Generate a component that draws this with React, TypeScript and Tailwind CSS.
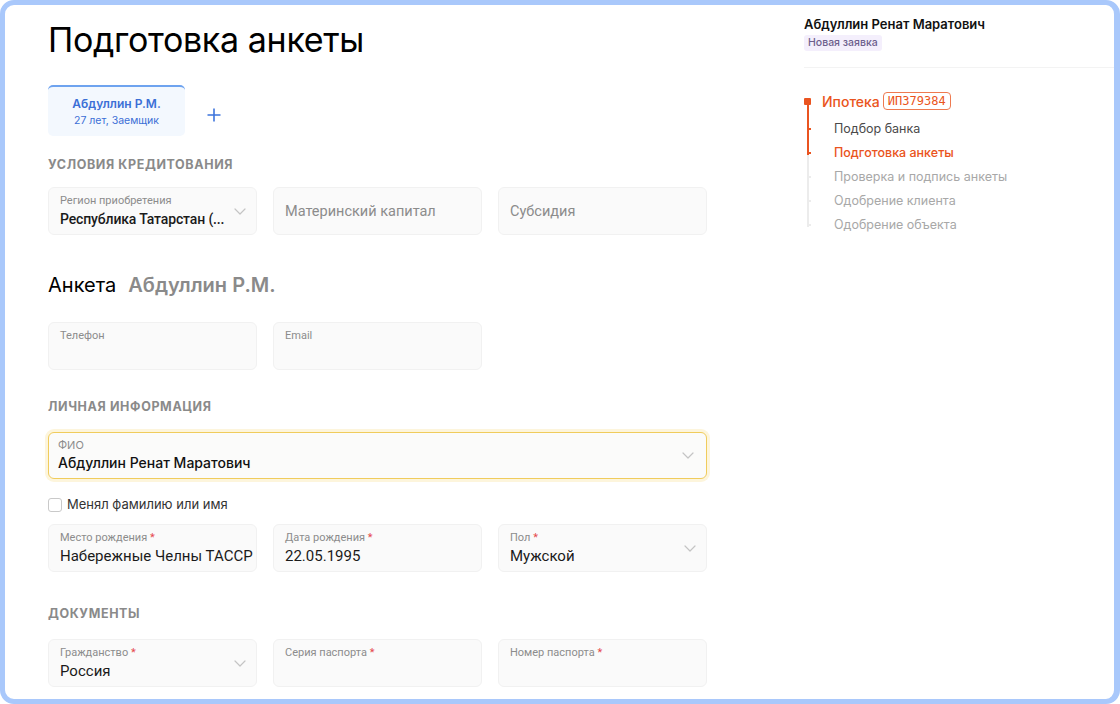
import React from "react";

const Chevron = () => (
  <svg width="12" height="7" viewBox="0 0 12 7" fill="none" className="shrink-0">
    <path d="M1 1l5 5 5-5" stroke="#c4c4c4" strokeWidth="1.2" strokeLinecap="round" strokeLinejoin="round" />
  </svg>
);

const Req = () => <span className="text-[#e5484d]"> *</span>;

function Field({ label, value, req, chevron, placeholder, valueClass = "text-[15px]" }: { label?: string; value?: string; req?: boolean; chevron?: boolean; placeholder?: string; valueClass?: string }) {
  return (
    <div className="h-[48px] rounded-[6px] bg-[#fafafa] border border-[#f1f1f1] flex items-center pl-[11px] pr-[10px]" style={{ fontFamily: "Roboto, sans-serif" }}>
      {placeholder ? (
        <div className="flex-1 text-[14.5px] text-[#8c8c8c] pt-[2px]">{placeholder}</div>
      ) : (
        <div className="flex-1 min-w-0 self-start pt-[6px]">
          <div className="text-[11px] leading-[14px] text-[#8c8c8c]">
            {label}
            {req && <Req />}
          </div>
          <div className={"leading-[22px] text-[#1a1a1a] whitespace-nowrap " + valueClass}>{value}</div>
        </div>
      )}
      {chevron && <Chevron />}
    </div>
  );
}

const Header = ({ children, className = "" }: { children: React.ReactNode; className?: string }) => (
  <div className={"text-[12.5px] leading-[16px] font-bold tracking-[0.05em] text-[#8a8a8a] " + className}>{children}</div>
);

export default function App() {
  const steps = [
    { t: "Подбор банка", c: "text-[#4a4a4a]", done: true },
    { t: "Подготовка анкеты", c: "text-[#ea5420] font-medium", done: true },
    { t: "Проверка и подпись анкеты", c: "text-[#a8a8a8]", done: false },
    { t: "Одобрение клиента", c: "text-[#a8a8a8]", done: false },
    { t: "Одобрение объекта", c: "text-[#a8a8a8]", done: false },
  ];
  return (
    <div className="w-[1120px] h-[704px] bg-white" style={{ fontFamily: "Inter, 'Noto Sans', sans-serif" }}>
      <div className="w-[1120px] h-[704px] rounded-[14px] border-[5px] border-r-[6px] border-[#a9c8fb] bg-white flex overflow-hidden">
        {/* main */}
        <div className="w-[756px] pl-[43px] pt-[13px] shrink-0">
          <div className="text-[34px] leading-[44px] text-black tracking-[-0.01em]">
            Подготовка анкеты
          </div>
          <div className="mt-[23px] flex items-center">
            <div className="w-[137px] h-[51px] rounded-[5px] bg-[#f3f8fe] border-t-2 border-[#6ea3ef] flex flex-col items-center justify-center">
              <div className="text-[12px] leading-[17px] font-semibold text-[#3b6fd6]">Абдуллин Р.М.</div>
              <div className="text-[10.5px] leading-[17px] text-[#3b6fd6]">27 лет, Заемщик</div>
            </div>
            <svg width="14" height="14" viewBox="0 0 14 14" className="ml-[22px] mt-[9px]">
              <path d="M7 0.5v13M0.5 7h13" stroke="#3d74dc" strokeWidth="1.6" />
            </svg>
          </div>

          <Header className="mt-[21px]">УСЛОВИЯ КРЕДИТОВАНИЯ</Header>
          <div className="mt-[14px] grid grid-cols-3 gap-x-[16px] w-[659px]">
            <Field label="Регион приобретения" value="Республика Татарстан (..." chevron valueClass="text-[14px] font-medium tracking-[-0.01em]" />
            <Field placeholder="Материнский капитал" />
            <Field placeholder="Субсидия" />
          </div>

          <div className="mt-[36px] flex items-baseline gap-[12px] text-[20px] leading-[28px]">
            <span className="text-black">Анкета</span>
            <span className="text-[#8a8a8a] font-semibold">Абдуллин Р.М.</span>
          </div>
          <div className="mt-[23px] grid grid-cols-3 gap-x-[16px] w-[659px]">
            <Field label="Телефон" value="" />
            <Field label="Email" value="" />
          </div>

          <Header className="mt-[29px]">ЛИЧНАЯ ИНФОРМАЦИЯ</Header>
          <div className="mt-[17px] w-[659px] h-[47px] rounded-[6px] bg-[#fbfbfa] border border-[#f0cc5c] shadow-[0_0_0_3px_#fdf5dc] flex items-center pl-[9px] pr-[12px]">
            <div className="flex-1 self-start pt-[5px]">
              <div className="text-[11px] leading-[14px] text-[#8c8c8c]">ФИО</div>
              <div className="text-[14px] leading-[22px] font-medium text-[#111]">Абдуллин Ренат Маратович</div>
            </div>
            <Chevron />
          </div>

          <div className="mt-[18px] flex items-center gap-[5px] h-[16px]">
            <div className="w-[14px] h-[14px] rounded-[3px] border border-[#c9c9c9] bg-white" />
            <span className="text-[13px] text-[#333]">Менял фамилию или имя</span>
          </div>
          <div className="mt-[11px] grid grid-cols-3 gap-x-[16px] w-[659px]">
            <Field label="Место рождения" req value="Набережные Челны ТАССР" />
            <Field label="Дата рождения" req value="22.05.1995" />
            <Field label="Пол" req value="Мужской" chevron />
          </div>

          <Header className="mt-[34px]">ДОКУМЕНТЫ</Header>
          <div className="mt-[17px] grid grid-cols-3 gap-x-[16px] w-[659px]">
            <Field label="Гражданство" req value="Россия" chevron />
            <Field label="Серия паспорта" req value="" />
            <Field label="Номер паспорта" req value="" />
          </div>
        </div>

        {/* sidebar */}
        <div className="flex-1 pl-[43px] pt-[10px]">
          <div className="text-[13px] leading-[18px] font-semibold text-[#111]">Абдуллин Ренат Маратович</div>
          <div className="mt-[2px] w-fit rounded-[3px] bg-[#f4effc] px-[4px] text-[10.5px] leading-[16px] font-medium text-[#6d5f8c]">Новая заявка</div>
          <div className="mt-[16px] h-px bg-[#f3f3f3]" />
          <div className="mt-[24px] relative">
            <div className="absolute left-[3px] top-[8px] w-[2px] h-[55px] bg-[#ea5420]" />
            <div className="absolute left-[3px] top-[63px] w-[2px] h-[72px] bg-[#ececec]" />
            <div className="flex items-center h-[18px]">
              <div className="relative w-[7px] h-[7px] rounded-[1px] bg-[#ea5420]" />
              <span className="ml-[11px] text-[14px] font-medium text-[#ea5420]">Ипотека</span>
              <span className="ml-[3px] rounded-[4px] border border-[#ee7a50] px-[4px] text-[12px] leading-[16px] text-[#ea5420]" style={{ fontFamily: "'DejaVu Sans Mono', monospace" }}>ИП379384</span>
            </div>
            <div className="mt-[7px]">
              {steps.map((s, i) => (
                <div key={i} className="relative h-[24px] flex items-center">
                  <div className={"absolute left-[5px] top-[11px] w-[2px] h-[1.5px] " + (s.done ? "bg-[#ea5420]" : "bg-[#ececec]")} />
                  <span className={"ml-[30px] text-[12.5px] " + s.c}>{s.t}</span>
                </div>
              ))}
            </div>
          </div>
        </div>
      </div>
    </div>
  );
}
